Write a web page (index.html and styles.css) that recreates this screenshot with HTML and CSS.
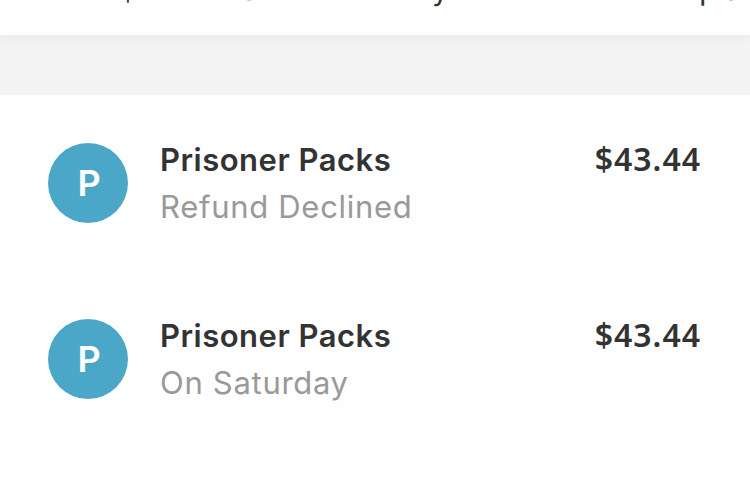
FILE: index.html
```html
<!DOCTYPE html>
<html lang="en">
<head>
<meta charset="utf-8">
<title>Activity</title>
<link rel="stylesheet" href="styles.css">
</head>
<body>
<header class="promo"><div class="promo-text"><span>Get $5</span><span>and</span><span>y</span><span>Credit</span><span>qua</span></div></header>
<main class="activity">
<article class="row">
<div class="avatar">P</div>
<div class="details"><h2 class="name">Prisoner Packs</h2><p class="status">Refund Declined</p></div>
<div class="amount">$43.44</div>
</article>
<article class="row">
<div class="avatar">P</div>
<div class="details"><h2 class="name">Prisoner Packs</h2><p class="status">On Saturday</p></div>
<div class="amount">$43.44</div>
</article>
</main>
</body>
</html>
```
FILE: styles.css
```css
* { box-sizing: border-box; margin: 0; padding: 0; }
body { width: 750px; height: 494px; overflow: hidden; background: #f4f4f4; font-family: Inter, "Open Sans", sans-serif; color: #333; }
.promo { height: 35px; background: #fefefe; box-shadow: 0 2px 16px rgba(0, 0, 0, .06); }
.promo-text { display: grid; grid-template-columns: 182px 190px 93px 163px 1fr; height: 35px; padding-left: 60px; overflow: hidden; white-space: nowrap; font-size: 30px; line-height: 36px; }
.promo-text span { display: block; margin-top: -29px; }
.activity { height: 399px; margin-top: 60px; padding: 48px 49px 0 48px; background: #fefefe; }
.row { display: flex; height: 80px; margin-bottom: 96px; }
.avatar { width: 80px; height: 80px; flex: none; border-radius: 50%; background: #4ba7c8; color: #fff; font-size: 36px; font-weight: 600; line-height: 80px; text-align: center; padding-left: 2px; }
.details { flex: 1; padding-left: 32px; white-space: nowrap; }
.name { font-size: 31px; line-height: 40px; font-weight: 600; letter-spacing: .5px; margin-top: -3px; }
.status { font-size: 31px; line-height: 40px; color: #999; font-weight: 400; letter-spacing: .7px; margin-top: 7px; }
.amount { font-family: "Noto Sans", sans-serif; font-size: 32px; line-height: 40px; font-weight: 600; letter-spacing: 1px; margin-top: -4px; }
```
